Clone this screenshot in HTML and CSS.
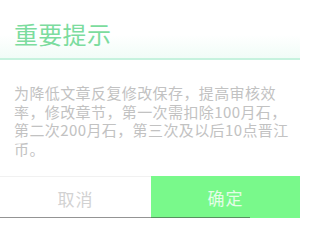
FILE: index.html
```html
<!DOCTYPE html>
<html lang="zh-CN">
<head>
<meta charset="utf-8">
<title>重要提示</title>
<link rel="stylesheet" href="styles.css">
</head>
<body>
<div class="dialog">
  <div class="header"><h1 class="title">重要提示</h1></div>
  <div class="divider"></div>
  <p class="message">为降低文章反复修改保存，提高审核效率，修改章节，第一次需扣除100月石，第二次200月石，第三次及以后10点晋江币。</p>
  <div class="actions">
    <button class="btn btn-cancel">取消</button>
    <button class="btn btn-ok">确定</button>
  </div>
  <div class="edge"></div>
</div>
</body>
</html>
```
FILE: styles.css
```css
html, body {
  margin: 0;
  padding: 0;
  background: #ffffff;
}
.dialog {
  position: relative;
  width: 300px;
  height: 218px;
  overflow: hidden;
  background: #ffffff;
  font-family: "Noto Sans CJK SC", "Noto Sans", sans-serif;
}
.header {
  height: 49px;
  padding: 9px 0 0 14px;
  display: flex;
  align-items: center;
  background: linear-gradient(to bottom, #ffffff 0%, #ffffff 60%, #f1fcf7 100%);
}
.title {
  margin: 0;
  font-size: 24px;
  font-weight: 400;
  line-height: 30px;
  color: #7cdc9e;
  letter-spacing: 0.3px;
}
.divider {
  height: 2px;
  background: #c6f2de;
}
.message {
  margin: 0;
  padding: 24px 10px 18px 14px;
  font-size: 15px;
  line-height: 18.5px;
  letter-spacing: 0.4px;
  color: #c2c2c2;
  height: 74px;
}
.actions {
  display: grid;
  grid-template-columns: 151px 1fr;
  height: 46px;
}
.btn {
  border: none;
  margin: 0;
  padding: 0 0 3px;
  font-family: inherit;
  font-size: 17px;
  letter-spacing: 1px;
}
.btn-cancel {
  background: #ffffff;
  color: #d2d2d2;
  border-top: 1px solid #f1f1f1;
}
.btn-ok {
  background: #79f98b;
  color: #e4fde7;
}
.edge {
  position: absolute;
  left: 0;
  bottom: 0;
  width: 250px;
  height: 1px;
  background: rgba(60, 60, 60, 0.55);
}
```
